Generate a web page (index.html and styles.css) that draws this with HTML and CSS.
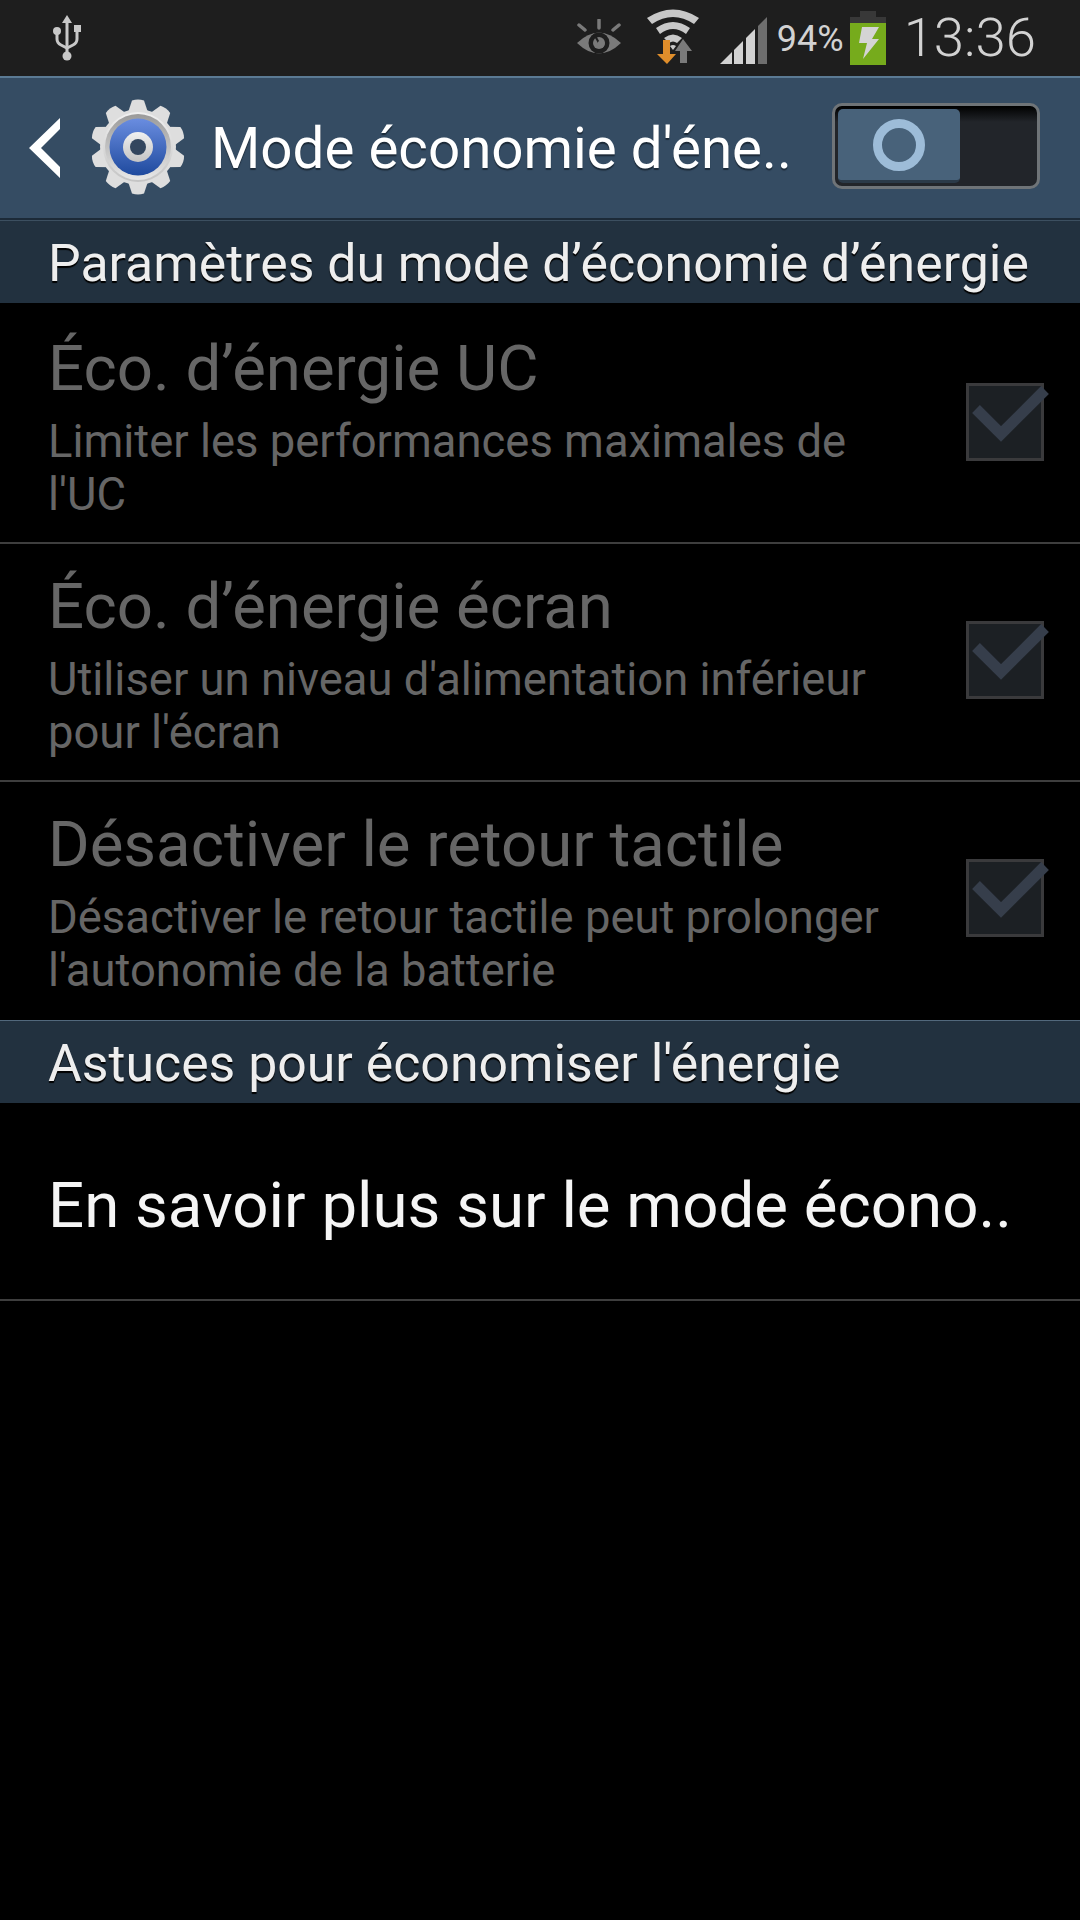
FILE: index.html
```html
<!DOCTYPE html>
<html lang="fr">
<head>
    <meta charset="UTF-8">
    <title>Mode économie d'énergie</title>
    <link rel="stylesheet" href="styles.css">
</head>
<body>
<div class="phone">
    <div class="statusbar">
        <svg class="ic-usb" width="30" height="48" viewBox="0 0 30 48">
            <path d="M15 1l5 8h-3.500v29h-3V9H10z" fill="#c8c8c8"/>
            <circle cx="15" cy="42" r="4.500" fill="#c8c8c8"/>
            <circle cx="5" cy="17" r="4" fill="#c8c8c8"/>
            <rect x="22" y="11" width="7" height="7" fill="#c8c8c8"/>
            <path d="M5 20v5q0 4 4 6l6 3 6-3q4-2 4-6v-8" fill="none" stroke="#c8c8c8" stroke-width="3"/>
        </svg>
        <div class="status-right">
            <svg class="ic-eye" width="46" height="38" viewBox="0 0 46 38">
                <path d="M1 24q22-21 44 0q-22 21-44 0z" fill="#7a7a7a"/>
                <circle cx="23" cy="24" r="10.500" fill="#1e1e1e"/>
                <circle cx="23" cy="24" r="6" fill="#7a7a7a"/>
                <path d="M18 15l5 9" stroke="#1e1e1e" stroke-width="2"/>
                <circle cx="25" cy="25" r="3.500" fill="#7a7a7a"/>
                <path d="M23 1v8M3 6l6 5M43 6l-6 5" stroke="#7a7a7a" stroke-width="3.500" stroke-linecap="round"/>
            </svg>
            <svg class="ic-wifi" width="54" height="56" viewBox="0 0 54 56">
                <path d="M1 10Q27-7 53 10l-5 6Q27 2 6 16z" fill="#c8c8c8"/>
                <path d="M10 20Q27 8 44 20l-4 6Q27 16 14 26z" fill="#c8c8c8"/>
                <path d="M18 30Q27 23 36 30l-5 5Q27 32 23 35z" fill="#c8c8c8"/>
                <path d="M24 38q3-2 6 0l-3 4z" fill="#c8c8c8"/>
                <path d="M37 31l9 12h-5v12h-7V43h-5z" fill="#7a7a7a"/>
                <path d="M17 32h7v14h6l-9 10-10-10h6z" fill="#e08e2b"/>
            </svg>
            <svg class="ic-signal" width="48" height="50" viewBox="0 0 48 50">
                <path d="M0 49l12-12v12z" fill="#d2d2d2"/>
                <path d="M14 35l9-9v23h-9z" fill="#d2d2d2"/>
                <path d="M26 23l9-9v35h-9z" fill="#d2d2d2"/>
                <path d="M38 11l9-9v47h-9z" fill="#6e6e6e"/>
            </svg>
            <span class="battery-text">94%</span>
            <svg class="ic-battery" width="36" height="54" viewBox="0 0 36 54">
                <rect x="10" y="0" width="16" height="7" fill="#383838"/>
                <rect x="0" y="6" width="36" height="6" fill="#383838"/>
                <rect x="0" y="12" width="36" height="42" fill="#76ab1c"/>
                <path d="M12 16h17l-7 12h7L13 48l4-16H9z" fill="#d4d4d4"/>
            </svg>
            <span class="clock">13:36</span>
        </div>
    </div>

    <div class="actionbar">
        <svg class="ic-back" width="34" height="62" viewBox="0 0 34 62">
            <path d="M32 1v11L13 31l19 19v11L1 31z" fill="#fff"/>
        </svg>
        <svg class="ic-gear" width="96" height="96" viewBox="0 0 96 96">
            <defs>
                <linearGradient id="metal" x1="0" y1="0" x2="0" y2="1">
                    <stop offset="0" stop-color="#f0f0f0"/>
                    <stop offset="1" stop-color="#c4c4c4"/>
                </linearGradient>
                <linearGradient id="ring" x1="0" y1="0" x2="0" y2="1">
                    <stop offset="0" stop-color="#9a9a9a"/>
                    <stop offset="1" stop-color="#e8e8e8"/>
                </linearGradient>
                <linearGradient id="blue" x1="0" y1="0" x2="0" y2="1">
                    <stop offset="0" stop-color="#6a8de0"/>
                    <stop offset="1" stop-color="#1f4a9e"/>
                </linearGradient>
                <path id="tooth" d="M42 1.500q6-2 12 0l5 15V79.500l-5 15q-6 2-12 0l-5-15V16.500z" fill="#dedede"/>
            </defs>
            <use href="#tooth"/>
            <use href="#tooth" transform="rotate(36 48 48)"/>
            <use href="#tooth" transform="rotate(72 48 48)"/>
            <use href="#tooth" transform="rotate(108 48 48)"/>
            <use href="#tooth" transform="rotate(144 48 48)"/>
            <circle cx="48" cy="48" r="38" fill="#dedede"/>
            <circle cx="48" cy="48" r="35" fill="url(#metal)"/>
            <circle cx="48" cy="48" r="33" fill="url(#ring)"/>
            <circle cx="48" cy="48" r="28.500" fill="url(#blue)"/>
            <circle cx="48" cy="48" r="15" fill="url(#metal)"/>
            <circle cx="48" cy="48" r="8" fill="#33465e"/>
        </svg>
        <div class="action-title">Mode économie d'éne..</div>
        <div class="toggle">
            <div class="toggle-knob"><div class="toggle-ring"></div></div>
        </div>
    </div>

    <div class="section-head first">Paramètres du mode d’économie d’énergie</div>

    <div class="row first">
        <div class="row-text">
            <div class="row-title">Éco. d’énergie UC</div>
            <div class="row-sub">Limiter les performances maximales de l'UC</div>
        </div>
        <svg class="check" width="84" height="78" viewBox="0 0 84 78">
            <rect x="1.500" y="1.500" width="75" height="75" fill="#1c2024" stroke="#3a3a3c" stroke-width="3"/>
            <path d="M10 26l25 25L79 7" fill="none" stroke="#363e4b" stroke-width="11"/>
        </svg>
    </div>
    <div class="row">
        <div class="row-text">
            <div class="row-title">Éco. d’énergie écran</div>
            <div class="row-sub">Utiliser un niveau d'alimentation inférieur pour l'écran</div>
        </div>
        <svg class="check" width="84" height="78" viewBox="0 0 84 78">
            <rect x="1.500" y="1.500" width="75" height="75" fill="#1c2024" stroke="#3a3a3c" stroke-width="3"/>
            <path d="M10 26l25 25L79 7" fill="none" stroke="#363e4b" stroke-width="11"/>
        </svg>
    </div>
    <div class="row no-line">
        <div class="row-text">
            <div class="row-title">Désactiver le retour tactile</div>
            <div class="row-sub">Désactiver le retour tactile peut prolonger l'autonomie de la batterie</div>
        </div>
        <svg class="check" width="84" height="78" viewBox="0 0 84 78">
            <rect x="1.500" y="1.500" width="75" height="75" fill="#1c2024" stroke="#3a3a3c" stroke-width="3"/>
            <path d="M10 26l25 25L79 7" fill="none" stroke="#363e4b" stroke-width="11"/>
        </svg>
    </div>

    <div class="section-head">Astuces pour économiser l'énergie</div>

    <div class="link-row">En savoir plus sur le mode écono..</div>
</div>
</body>
</html>
```

FILE: styles.css
```css
html, body {
    margin: 0;
    padding: 0;
    background-color: #000;
}

body * {
    font-family: Roboto, "Noto Sans", sans-serif;
    box-sizing: border-box;
}

.phone {
    width: 1080px;
    height: 1920px;
    overflow: hidden;
}

.statusbar {
    height: 76px;
    background-color: #1e1e1e;
    display: flex;
    align-items: center;
    justify-content: space-between;
    padding-left: 52px;
    padding-right: 44px;
}

.status-right {
    display: flex;
    align-items: center;
    color: #d2d2d2;
}

.ic-eye {
    margin-right: 24px;
}

.ic-wifi {
    margin-right: 20px;
    margin-top: -4px;
}

.ic-signal {
    margin-right: 9px;
    margin-top: 4px;
}

.battery-text {
    font-size: 36px;
    margin-right: 6px;
    margin-top: 2px;
}

.clock {
    font-size: 54.500px;
    font-weight: 300;
    margin-left: 18px;
    margin-top: -2px;
}

.actionbar {
    height: 144px;
    background-color: #354c63;
    border-top: 2px solid #5b7a94;
    border-bottom: 2px solid #1c2a38;
    display: flex;
    align-items: center;
    padding-left: 28px;
    padding-right: 40px;
}

.ic-gear {
    margin-left: 28px;
    margin-right: 25px;
    margin-top: -3px;
}

.action-title {
    flex: 1;
    font-size: 56.500px;
    color: #fff;
    white-space: nowrap;
    margin-top: 2px;
    text-shadow: 0 2px 1px #1c2a38;
}

.toggle {
    width: 208px;
    height: 86px;
    border: 3px solid #6f7478;
    border-radius: 10px;
    background: linear-gradient(#000, #22252a 16px);
    padding: 3px;
    margin-top: -4px;
}

.toggle-knob {
    width: 122px;
    height: 74px;
    border-radius: 5px;
    background-color: #48627a;
    border-bottom: 3px solid #2b3a48;
    display: flex;
    align-items: center;
    justify-content: center;
}

.toggle-ring {
    width: 52px;
    height: 52px;
    border-radius: 50%;
    border: 9px solid #9dbcd8;
}

.section-head {
    height: 83px;
    background-color: #22313f;
    border-top: 1px solid #52687c;
    color: #eee;
    font-size: 51.800px;
    line-height: 85px;
    padding-left: 48px;
    white-space: nowrap;
    text-shadow: 0 2px 1px #000;
}

.section-head.first {
    border-top: 1px solid #3c4f60;
}

.row {
    height: 238px;
    border-bottom: 2px solid #3e3e3e;
    display: flex;
    align-items: center;
    justify-content: space-between;
    padding-left: 48px;
    padding-right: 30px;
    padding-bottom: 4px;
}

.row.first {
    height: 241px;
    padding-bottom: 1px;
}

.row.no-line {
    border-bottom-color: transparent;
}

.row-text {
    width: 850px;
    margin-top: 8px;
}

.row-title {
    font-size: 63.500px;
    color: #666;
    line-height: 76px;
    margin-bottom: 8px;
    white-space: nowrap;
}

.row-sub {
    font-size: 45.400px;
    color: #666;
    line-height: 53px;
}

.link-row {
    height: 198px;
    border-bottom: 2px solid #3e3e3e;
    color: #f5f5f5;
    font-size: 63.600px;
    line-height: 191px;
    padding-top: 7px;
    padding-left: 48px;
    white-space: nowrap;
}
```
